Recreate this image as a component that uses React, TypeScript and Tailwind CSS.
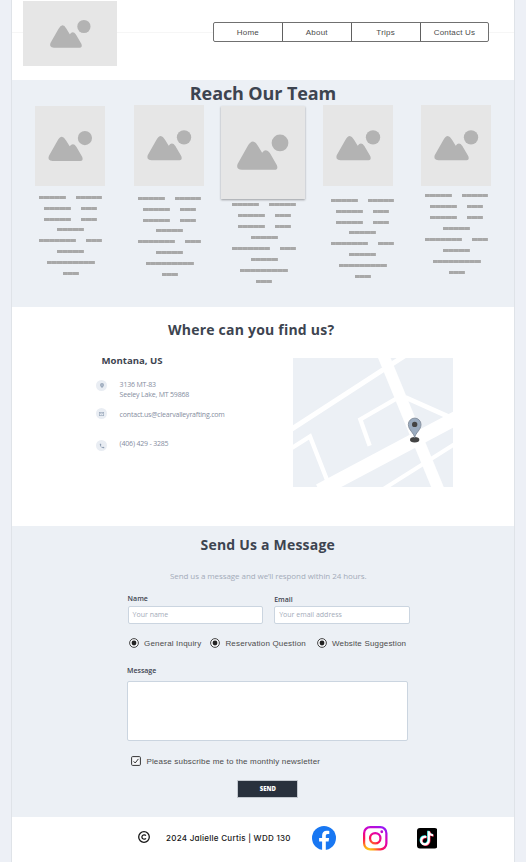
import React from "react";

const sans = "font-['Open_Sans',sans-serif]";
const arial = "font-['Liberation_Sans',Arial,sans-serif]";

function Picture({ className, view }: { className: string; view: string }) {
  return (
    <div className={`bg-[#e6e6e6] ${className}`}>
      <svg className="block h-full w-full" viewBox={view}>
        <circle cx="110" cy="22" r="21.5" fill="#b3b3b3" />
        <path
          fill="#b3b3b3"
          d="M12 91Q-4 90 1 76L27 30Q40 7 53 29L64 47Q74 34 84 48L102 79Q106 91 96 91Z"
        />
      </svg>
    </div>
  );
}

const rows: number[][] = [[5, 5], [5, 3], [5, 3], [5], [7, 3], [5], [9], [3]];

function Placeholder({ className, tight }: { className: string; tight: boolean }) {
  return (
    <div className={`w-[64px] ${className}`}>
      {rows.map((row, i) => (
        <div
          key={i}
          className={`flex justify-center gap-[10px] ${tight && i === 2 ? "h-[10px]" : "h-[11px]"}`}
        >
          {row.map((n, j) => (
            <span key={j} className="flex">
              {Array.from({ length: n }, (_, k) => (
                <span key={k} className="h-[3px] w-[5.35px] border-r border-[#b0b0b0] bg-[#a8a8a8]" />
              ))}
            </span>
          ))}
        </div>
      ))}
    </div>
  );
}

const box = "-40 -75 211 243";
const team = [
  { col: "ml-[22.6px] mt-[26px] w-[70.4px]", pic: "h-[80.4px]", text: "ml-[4px] mt-[9.6px]", tight: true },
  { col: "ml-[28.6px] mt-[25px] w-[70.4px]", pic: "h-[81px]", text: "ml-[4px] mt-[11px]", tight: true },
  {
    col: "ml-[17.2px] mt-[26px] w-[83.6px]",
    pic: "h-[93px] shadow-[0_1px_2px_rgba(0,0,0,0.35)]",
    text: "ml-[11px] mt-[4px]",
    tight: false,
  },
  { col: "ml-[17.8px] mt-[25px] w-[70.4px]", pic: "h-[81px]", text: "ml-[8px] mt-[13px]", tight: true },
  { col: "ml-[27.8px] mt-[25px] w-[70.4px]", pic: "h-[81px]", text: "ml-[4px] mt-[8px]", tight: false },
];

function Badge({ children }: { children: React.ReactNode }) {
  return (
    <span className="flex size-[11px] shrink-0 items-center justify-center rounded-full bg-[#e9edf3]">
      {children}
    </span>
  );
}

function Radio({ className, label }: { className: string; label: string }) {
  return (
    <label className={`flex items-center ${className}`}>
      <svg className="mr-[5px] size-[10px] shrink-0" viewBox="0 0 10 10">
        <circle cx="5" cy="5" r="4.4" fill="#f4f5f7" stroke="#333" strokeWidth="0.9" />
        <circle cx="5" cy="5" r="2.4" fill="#222" />
      </svg>
      <span className="mt-px whitespace-nowrap">{label}</span>
    </label>
  );
}

export default function App() {
  return (
    <div className="h-[862px] w-[526px] overflow-hidden bg-[#edf0f6]">
      <div className={`ml-[11px] h-[862px] w-[504px] border-x border-[#dfe3e8] bg-white text-[#3d4450] ${sans}`}>
        <header className="flex h-[80px] items-start">
          <div className="mt-[32px] h-px w-[10.5px] bg-[#f6f6f6]" />
          <Picture className="mt-[1px] h-[65.4px] w-[94.5px]" view="-88 -61 307 213" />
          <div className="mt-[32px] h-px w-[96px] bg-[#f6f6f6]" />
          <nav
            className={`mt-[22px] flex h-[20px] w-[276.4px] divide-x divide-[#606060] rounded-[2px] border border-[#707070] text-[8px] leading-[19px] tracking-[0.2px] text-[#4b4b4b] ${arial}`}
          >
            {["Home", "About", "Trips", "Contact Us"].map((t) => (
              <a key={t} className="flex-1 text-center">
                {t}
              </a>
            ))}
          </nav>
          <div className="mt-[32px] h-px flex-1 bg-[#f6f6f6]" />
        </header>

        <section className="h-[227px] bg-[#ecf0f5]">
          <h1 className="-mb-[26px] h-[26px] text-center text-[18px] leading-[27px] font-bold tracking-[-0.1px]">
            Reach Our Team
          </h1>
          <div className="flex items-start">
            {team.map((m, i) => (
              <div key={i} className={`shrink-0 ${m.col}`}>
                <Picture className={m.pic} view={i === 2 ? "-41 -73 213.5 239" : box} />
                <Placeholder className={m.text} tight={m.tight} />
              </div>
            ))}
          </div>
        </section>

        <section className="h-[219px]">
          <h2 className="ml-[156px] pt-[13px] text-[14px] leading-[20px] font-bold tracking-[0.22px] whitespace-nowrap">
            Where can you find us?
          </h2>
          <div className="flex">
            <div className="ml-[84px] mt-[14px] w-[196.7px] text-[7px] leading-[10px] tracking-[-0.19px] text-[#858da0]">
              <h3 className="ml-[5.5px] text-[9.6px] leading-[14px] font-bold tracking-normal text-[#3d4450]">
                Montana, US
              </h3>
              <div className="mt-[12px] flex items-start">
                <Badge>
                  <svg className="h-[5px] w-[4px]" viewBox="0 0 8 10">
                    <path fill="#9dabbd" fillRule="evenodd" d="M4 0a4 4 0 0 1 4 4C8 6 4 10 4 10S0 6 0 4a4 4 0 0 1 4-4Zm0 3a1 1 0 1 0 0 2 1 1 0 0 0 0-2Z" />
                  </svg>
                </Badge>
                <p className="ml-[12.6px] whitespace-nowrap">
                  3136 MT-83
                  <br />
                  Seeley Lake, MT 59868
                </p>
              </div>
              <div className="mt-[8px] flex items-start">
                <Badge>
                  <svg className="h-[4px] w-[5px]" viewBox="0 0 10 8" fill="none" stroke="#9dabbd" strokeWidth="1.4">
                    <rect x="0.7" y="0.7" width="8.6" height="6.6" />
                    <path d="M1 1l4 3 4-3" />
                  </svg>
                </Badge>
                <p className="ml-[12.6px] mt-[2px] whitespace-nowrap">contact.us@clearvalleyrafting.com</p>
              </div>
              <div className="mt-[19px] flex items-start">
                <div className="mt-[1px]">
                  <Badge>
                    <svg className="size-[6px]" viewBox="0 0 24 24" fill="#8d9cb0">
                      <path d="M6.6 10.8a15 15 0 0 0 6.6 6.6l2.2-2.2a1 1 0 0 1 1-.25 11.400 11.400 0 0 0 3.600.57 1 1 0 0 1 1 1V20a1 1 0 0 1-1 1A17 17 0 0 1 3 4a1 1 0 0 1 1-1h3.500a1 1 0 0 1 1 1c0 1.250.2 2.450.57 3.570a1 1 0 0 1-.25 1z" />
                    </svg>
                  </Badge>
                </div>
                <p className="ml-[12.6px] whitespace-nowrap">(406) 429 - 3285</p>
              </div>
            </div>
            <svg className="mt-[17.500px] h-[129.5px] w-[160px] bg-[#ecf0f5]" viewBox="38 142 480 388">
              <g fill="none" stroke="#fff">
                <path d="M30 358L390 124" strokeWidth="15" />
                <path d="M308 132L476 540" strokeWidth="35" />
                <path d="M268 405L240 326L365 254" strokeWidth="13" />
                <path d="M375 260L505 318" strokeWidth="14" />
                <path d="M117 540L537 317" strokeWidth="42" />
                <path d="M301 540L534 393" strokeWidth="12" />
                <path d="M28 416L89 377L143 515" strokeWidth="13" />
              </g>
              <ellipse cx="403" cy="387" rx="14" ry="8" fill="#444" />
              <path d="M403 381C401 366 384 358 384 341a19 19 0 0 1 38 0C422 358 405 366 403 381Z" fill="#9bacc0" stroke="#808996" strokeWidth="2.5" />
              <circle cx="403" cy="341" r="8" fill="#444" />
            </svg>
          </div>
        </section>

        <section className="h-[291px] bg-[#ecf0f5] pt-[9px]">
          <h2 className="ml-[188.500px] text-[14px] leading-[20px] font-bold tracking-[0.21px] whitespace-nowrap">
            Send Us a Message
          </h2>
          <p className="ml-[158px] mt-[15px] text-[8px] leading-[12px] tracking-[-0.08px] whitespace-nowrap text-[#a3abb9]">
            Send us a message and we’ll respond within 24 hours.
          </p>
          <div className="ml-[115.600px] mt-[12px] flex gap-[10.800px] text-[7px] leading-[10px]">
            <label className="w-[135.800px]">
              <span className="block h-[12px] font-semibold">Name</span>
              <span className="block h-[17.500px] rounded-[2px] border border-[#cbd5e0] bg-white pl-[4px] leading-[16px] text-[#a3abb9]">
                Your name
              </span>
            </label>
            <label className="w-[135.800px]">
              <span className="block h-[12px] pt-[1px] font-semibold">Email</span>
              <span className="block h-[17.500px] rounded-[2px] border border-[#cbd5e0] bg-white pl-[4px] leading-[16px] text-[#a3abb9]">
                Your email address
              </span>
            </label>
          </div>
          <div className={`ml-[117px] mt-[14.500px] flex h-[10px] text-[8px] tracking-[0.18px] text-[#4b4b4b] ${arial}`}>
            <Radio className="w-[81.400px]" label="General Inquiry" />
            <Radio className="w-[106.600px]" label="Reservation Question" />
            <Radio className="" label="Website Suggestion" />
          </div>
          <label className="ml-[115px] mt-[18px] block text-[7px] leading-[10px] font-semibold">
            Message
            <span className="mt-[5px] block h-[60px] w-[281px] rounded-[2px] border border-[#cbd5e0] bg-white" />
          </label>
          <label className={`ml-[119.400px] mt-[15px] flex h-[10px] items-center text-[8px] tracking-[0.185px] text-[#4b4b4b] ${arial}`}>
            <svg className="mr-[5px] size-[10px]" viewBox="0 0 10 10" fill="none" stroke="#333">
              <rect x="0.6" y="0.6" width="8.8" height="8.8" rx="1" fill="#f7f8fa" strokeWidth="1" />
              <path d="M2.600 5.300L4.200 7L7.400 2.900" strokeWidth="1" />
            </svg>
            <span className="mt-[2px]">Please subscribe me to the monthly newsletter</span>
          </label>
          <button className="ml-[225.400px] mt-[13.500px] block h-[18px] w-[61px] rounded-[1px] border border-[#c3c8cf] bg-[#29313d] text-[6px] leading-[16px] font-extrabold text-white">
            SEND
          </button>
        </section>

        <footer className="flex h-[45px] items-start bg-white text-[#161616]">
          <svg className="ml-[126px] mt-[13.500px] size-[12px]" viewBox="0 0 12 12" fill="none" stroke="#161616" strokeWidth="1.3">
            <circle cx="6" cy="6" r="5.300" />
            <path d="M7.900 4.700A2.200 2.200 0 1 0 7.900 7.300" />
          </svg>
          <p className="ml-[16px] mt-[15px] w-[145.500px] font-['Inter',sans-serif] text-[8px] leading-[12px] font-medium tracking-[0.27px] whitespace-nowrap [font-feature-settings:'cv11']">
            2024 Jalielle Curtis | WDD 130
          </p>
          <svg className="mt-[9px] size-[24px]" viewBox="0 0 24 24">
            <circle cx="12" cy="12" r="12" fill="#1877f2" />
            <path fill="#fff" d="M10.100 24v-8.500H7.100V12h3V9.400c0-3 1.800-4.700 4.500-4.700 1.300 0 2.700.2 2.700.2v3h-1.500c-1.500 0-2 .9-2 1.900V12h3.300l-.5 3.500h-2.800V24Z" />
          </svg>
          <svg className="ml-[27.500px] mt-[9px] size-[24.500px]" viewBox="0 0 24 24" fill="none">
            <defs>
              <radialGradient id="ig" cx="0.2" cy="1.05" r="1.15">
                <stop offset="0" stopColor="#ffdd15" />
                <stop offset="0.22" stopColor="#ff9a10" />
                <stop offset="0.48" stopColor="#ff1450" />
                <stop offset="0.75" stopColor="#e000b4" />
                <stop offset="1" stopColor="#9a16f5" />
              </radialGradient>
            </defs>
            <path
              fill="url(#ig)"
              fillRule="evenodd"
              d="M7 0h10a7 7 0 0 1 7 7v10a7 7 0 0 1-7 7H7a7 7 0 0 1-7-7V7a7 7 0 0 1 7-7Zm0 2.200A4.800 4.800 0 0 0 2.200 7v10A4.800 4.800 0 0 0 7 21.800h10a4.800 4.800 0 0 0 4.800-4.800V7A4.800 4.800 0 0 0 17 2.200ZM12 5.800a6.200 6.200 0 1 1 0 12.400 6.200 6.200 0 0 1 0-12.400Zm0 2.200a4 4 0 1 0 0 8 4 4 0 0 0 0-8ZM18.400 4.200a1.400 1.400 0 1 1 0 2.800 1.400 1.400 0 0 1 0-2.800Z"
            />
          </svg>
          <svg className="ml-[29px] mt-[11px] size-[20.500px]" viewBox="0 0 21 21">
            <rect width="21" height="21" rx="3" fill="#000" />
            <g fill="none" strokeWidth="2.200">
              <path stroke="#25f4ee" d="M8.900 8.700a3.900 3.900 0 1 0 2.600 3.700V2.800c.2 2.300 1.800 3.900 4.400 4.100" />
              <path stroke="#fe2c55" d="M10.100 9.700a3.900 3.900 0 1 0 2.600 3.700V3.800c.2 2.300 1.800 3.900 4.400 4.100" />
              <path stroke="#fff" d="M9.500 9.200a3.900 3.900 0 1 0 2.600 3.700V3.300c.2 2.300 1.800 3.900 4.400 4.100" />
            </g>
          </svg>
        </footer>
      </div>
    </div>
  );
}
